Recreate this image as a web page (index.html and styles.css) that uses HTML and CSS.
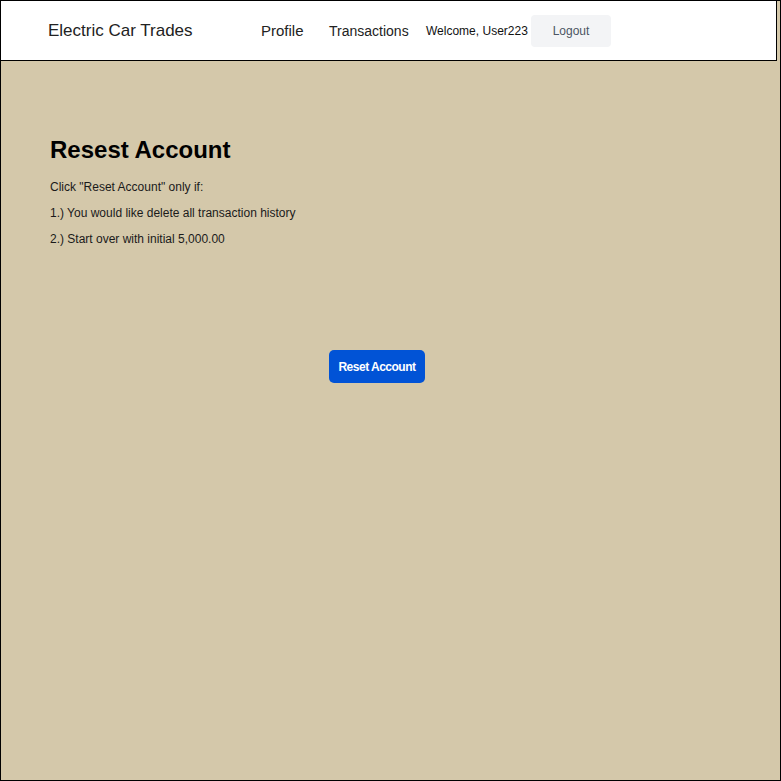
FILE: index.html
```html
<!DOCTYPE html>
<html>
<head>
<meta charset="utf-8">
<link rel="stylesheet" href="styles.css">
</head>
<body>
<div class="page">
  <header class="topbar">
    <span class="brand">Electric Car Trades</span>
    <a class="nav nav-profile">Profile</a>
    <a class="nav nav-tx">Transactions</a>
    <span class="welcome">Welcome, User223</span>
    <button class="logout">Logout</button>
  </header>
  <main class="content">
    <h1 class="title">Resest Account</h1>
    <p class="line">Click "Reset Account" only if:</p>
    <p class="line">1.) You would like delete all transaction history</p>
    <p class="line">2.) Start over with initial 5,000.00</p>
    <div class="actions">
      <button class="reset">Reset Account</button>
    </div>
  </main>
</div>
</body>
</html>
```
FILE: styles.css
```css
html, body {
  margin: 0;
  padding: 0;
}
body {
  font-family: "Liberation Sans", Arial, sans-serif;
}
.page {
  box-sizing: border-box;
  height: 781px;
  border: 1px solid #000;
  background: #d4c8aa;
}
.topbar {
  box-sizing: border-box;
  width: calc(100% - 3px);
  height: 60px;
  background: #fff;
  border-right: 1px solid #000;
  border-bottom: 1px solid #000;
  display: flex;
  align-items: center;
  padding-left: 47px;
}
.brand {
  font-size: 17px;
  color: #222;
  width: 213px;
}
.nav {
  color: #222;
  cursor: pointer;
}
.nav-profile {
  font-size: 15px;
  width: 68px;
}
.nav-tx {
  font-size: 14px;
  width: 97px;
}
.welcome {
  font-size: 12px;
  color: #111;
  width: 105px;
}
.logout {
  font-family: inherit;
  font-size: 12px;
  color: #4b5563;
  background: #f3f4f6;
  border: none;
  border-radius: 4px;
  width: 80px;
  height: 32px;
  padding: 0;
  margin-top: 1px;
}
.content {
  padding-left: 49px;
  padding-top: 75px;
}
.title {
  margin: 0 0 10px 0;
  font-size: 24px;
  line-height: 28px;
  font-weight: bold;
  color: #000;
}
.line {
  margin: 0;
  font-size: 12px;
  line-height: 26px;
  color: #1a1a1a;
}
.actions {
  padding-top: 98px;
  padding-left: 279px;
}
.reset {
  font-family: inherit;
  font-size: 12px;
  font-weight: bold;
  letter-spacing: -0.5px;
  color: #fff;
  background: #0153d6;
  border: none;
  border-radius: 5px;
  width: 96px;
  height: 33px;
  padding: 0;
}
```
